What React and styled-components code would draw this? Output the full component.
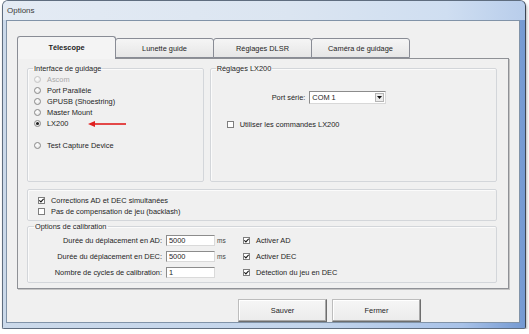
import React from "react";
import styled, { createGlobalStyle } from "styled-components";

const GlobalStyle = createGlobalStyle`
  html, body {
    margin: 0;
    padding: 0;
    background: #ffffff;
  }
  body {
    font-family: "Liberation Sans", Arial, sans-serif;
    font-size: 7.4px;
    color: #1e1e1e;
  }
`;

const Window = styled.div`
  box-sizing: border-box;
  width: 524px;
  height: 329px;
  margin-left: 2px;
  display: flex;
  flex-direction: column;
  border: 1px solid #5f6d7f;
  border-right-color: #3c4654;
  border-radius: 6px 6px 2px 2px;
  background: linear-gradient(to right, #cbd9ea 0%, #c3d5ec 60%, #a8c2e8 88%, #7499d2 100%);
  box-shadow: 1px 2px 3px rgba(0, 0, 0, 0.3);
  overflow: hidden;
`;

const TitleBar = styled.div`
  height: 19px;
  flex: none;
  display: flex;
  align-items: center;
  padding-left: 4px;
  font-size: 8px;
  color: #3a3a3a;
  background: linear-gradient(to right, #e4ebf4 0%, #dbe5f1 55%, #cfdef1 85%, #b8cdeb 100%);
`;

const Client = styled.div`
  flex: 1;
  margin: 0 5px 5px 3px;
  border: 1px solid #8193a8;
  background: #f0f0f0;
  padding: 15px 10px 0 10px;
  display: flex;
  flex-direction: column;
`;

const TabStrip = styled.div`
  display: flex;
  align-items: flex-end;
  height: 22px;
  position: relative;
  z-index: 1;
`;

const Tab = styled.div`
  box-sizing: border-box;
  width: 99px;
  height: ${(p) => (p.$active ? 23 : 20)}px;
  margin-bottom: ${(p) => (p.$active ? -1 : 0)}px;
  display: flex;
  align-items: center;
  justify-content: center;
  padding-bottom: ${(p) => (p.$active ? 2 : 0)}px;
  border: 1px solid #898c95;
  border-bottom: ${(p) => (p.$active ? "none" : "1px solid #898c95")};
  border-radius: 3px 3px 0 0;
  font-weight: ${(p) => (p.$active ? "bold" : "normal")};
  background: ${(p) =>
    p.$active ? "#f4f4f4" : "linear-gradient(#f5f5f5, #e6e6e6)"};
  & + & {
    margin-left: -1px;
  }
`;

const Panel = styled.div`
  box-sizing: border-box;
  height: 231px;
  flex: none;
  border: 1px solid #8f9196;
  box-shadow: 1px 1px 0 #c4c4c4;
  background: #f0f0f0;
  padding: 5px 11px 0 9px;
  display: flex;
  flex-direction: column;
`;

const TopRow = styled.div`
  display: flex;
  gap: 6px;
`;

const GroupBox = styled.fieldset`
  box-sizing: border-box;
  margin: ${(p) => p.$mt || 0}px 0 0 0;
  width: ${(p) => (p.$w ? `${p.$w}px` : "auto")};
  height: ${(p) => p.$h}px;
  padding: ${(p) => p.$pad || "0 6px"};
  border: 1px solid #d3d6da;
  border-radius: 2px;
  box-shadow: inset 1px 1px 0 #fbfbfb;
  display: flex;
  flex-direction: column;
  min-width: 0;
`;

const Legend = styled.legend`
  padding: 0 1px;
  margin-left: ${(p) => p.$ml ?? -1}px;
  line-height: 9px;
`;

const Option = styled.label`
  display: flex;
  align-items: center;
  gap: 6px;
  height: 11px;
  margin-top: ${(p) => p.$mt || 0}px;
  padding-left: ${(p) => p.$pl || 0}px;
  color: ${(p) => (p.$disabled ? "#a9a9a9" : "inherit")};
`;

const Radio = styled.span`
  box-sizing: border-box;
  width: 7px;
  height: 7px;
  border-radius: 50%;
  border: 1px solid ${(p) => (p.$disabled ? "#c5c5c5" : "#8a8a8a")};
  background: radial-gradient(circle at 40% 35%, #ffffff, #dedede);
  display: flex;
  align-items: center;
  justify-content: center;
  flex: none;
`;

const RadioDot = styled.span`
  width: 3px;
  height: 3px;
  border-radius: 50%;
  background: #1e1e1e;
`;

const Box = styled.span`
  box-sizing: border-box;
  width: 7px;
  height: 7px;
  border: 1px solid #7e7e7e;
  background: #fff;
  display: flex;
  align-items: center;
  justify-content: center;
  flex: none;
`;

const Arrow = styled.svg`
  margin-left: 14px;
  flex: none;
`;

const PortRow = styled.div`
  display: flex;
  align-items: center;
  gap: 4px;
  margin-top: 18px;
  padding-left: 55px;
`;

const Combo = styled.div`
  box-sizing: border-box;
  width: 77px;
  height: 13px;
  background: #fff;
  border: 1px solid #8c8c8c;
  border-right-color: #d8d8d8;
  border-bottom-color: #d8d8d8;
  display: flex;
  align-items: center;
  justify-content: space-between;
  padding: 0 1px 0 2px;
`;

const ComboButton = styled.span`
  box-sizing: border-box;
  width: 9px;
  height: 9px;
  background: #ececec;
  border: 1px solid #b5b5b5;
  display: flex;
  align-items: center;
  justify-content: center;
`;

const CalibGrid = styled.div`
  display: grid;
  grid-template-columns: 138px 49px 28px auto;
  grid-auto-rows: 12px;
  row-gap: 4px;
  align-items: center;
  margin-top: 3px;
`;

const FieldLabel = styled.span`
  text-align: right;
  padding-right: 4px;
`;

const TextInput = styled.div`
  box-sizing: border-box;
  height: 11px;
  background: #fff;
  border: 1px solid #8c8c8c;
  border-right-color: #dadada;
  border-bottom-color: #dadada;
  padding-left: 2px;
  display: flex;
  align-items: center;
`;

const Unit = styled.span`
  padding-left: 2px;
  font-size: 6.5px;
  color: #444;
`;

const ButtonRow = styled.div`
  display: flex;
  gap: 5px;
  margin-top: 10px;
  padding-left: 221px;
`;

const Button = styled.div`
  box-sizing: border-box;
  width: 89px;
  height: 23px;
  display: flex;
  align-items: center;
  justify-content: center;
  background: linear-gradient(#f6f6f6, #ebebeb);
  border: 1px solid #bdbdbd;
  border-right-color: #6e6e6e;
  border-bottom-color: #6e6e6e;
  box-shadow: inset -1px -1px 0 #a8a8a8, inset 1px 1px 0 #ffffff;
`;

const Check = () => (
  <Box>
    <svg width="5" height="5" viewBox="0 0 5 5">
      <path d="M0.3 2.3 L1.9 3.9 L4.7 0.8" fill="none" stroke="#1a1a1a" strokeWidth="1.2" />
    </svg>
  </Box>
);

const CheckOption = ({ checked, children, pl, mt }) => (
  <Option $pl={pl} $mt={mt}>
    {checked ? <Check /> : <Box />}
    <span>{children}</span>
  </Option>
);

const RadioOption = ({ checked, disabled, children, mt, extra }) => (
  <Option $disabled={disabled} $mt={mt}>
    <Radio $disabled={disabled}>{checked && <RadioDot />}</Radio>
    <span>{children}</span>
    {extra}
  </Option>
);

const calibration = [
  { label: "Durée du déplacement en AD:", value: "5000", unit: "ms", check: "Activer AD" },
  { label: "Durée du déplacement en DEC:", value: "5000", unit: "ms", check: "Activer DEC" },
  { label: "Nombre de cycles de calibration:", value: "1", unit: "", check: "Détection du jeu en DEC" },
];

const App = () => {
  return (
    <>
      <GlobalStyle />
      <Window>
        <TitleBar>Options</TitleBar>
        <Client>
          <TabStrip>
            <Tab $active>Télescope</Tab>
            <Tab>Lunette guide</Tab>
            <Tab>Réglages DLSR</Tab>
            <Tab>Caméra de guidage</Tab>
          </TabStrip>
          <Panel>
            <TopRow>
              <GroupBox $w={177} $h={118} $pad="1px 6px 0 6px">
                <Legend>Interface de guidage</Legend>
                <RadioOption disabled>Ascom</RadioOption>
                <RadioOption>Port Parallèle</RadioOption>
                <RadioOption>GPUSB (Shoestring)</RadioOption>
                <RadioOption>Master Mount</RadioOption>
                <RadioOption
                  checked
                  extra={
                    <Arrow width="38" height="6" viewBox="0 0 38 6">
                      <path d="M0 3 L7 0 L7 6 Z" fill="#e02020" />
                      <rect x="6" y="2.2" width="32" height="1.6" fill="#e02020" />
                    </Arrow>
                  }
                >
                  LX200
                </RadioOption>
                <RadioOption mt={11}>Test Capture Device</RadioOption>
              </GroupBox>
              <GroupBox $w={288} $h={118} $pad="0 6px">
                <Legend>Réglages LX200</Legend>
                <PortRow>
                  <span>Port série:</span>
                  <Combo>
                    <span>COM 1</span>
                    <ComboButton>
                      <svg width="5" height="3" viewBox="0 0 5 3">
                        <path d="M0 0 L5 0 L2.5 3 Z" fill="#111" />
                      </svg>
                    </ComboButton>
                  </Combo>
                </PortRow>
                <CheckOption pl={10} mt={15}>
                  Utiliser les commandes LX200
                </CheckOption>
              </GroupBox>
            </TopRow>
            <GroupBox $h={32} $mt={7} $pad="5px 10px 0">
              <CheckOption checked>Corrections AD et DEC simultanées</CheckOption>
              <CheckOption>Pas de compensation de jeu (backlash)</CheckOption>
            </GroupBox>
            <GroupBox $h={61} $mt={1} $pad="0 0">
              <Legend $ml={6}>Options de calibration</Legend>
              <CalibGrid>
                {calibration.map((row) => (
                  <React.Fragment key={row.label}>
                    <FieldLabel>{row.label}</FieldLabel>
                    <TextInput>{row.value}</TextInput>
                    <Unit>{row.unit}</Unit>
                    <CheckOption checked>{row.check}</CheckOption>
                  </React.Fragment>
                ))}
              </CalibGrid>
            </GroupBox>
          </Panel>
          <ButtonRow>
            <Button>Sauver</Button>
            <Button>Fermer</Button>
          </ButtonRow>
        </Client>
      </Window>
    </>
  );
};

export default App;
